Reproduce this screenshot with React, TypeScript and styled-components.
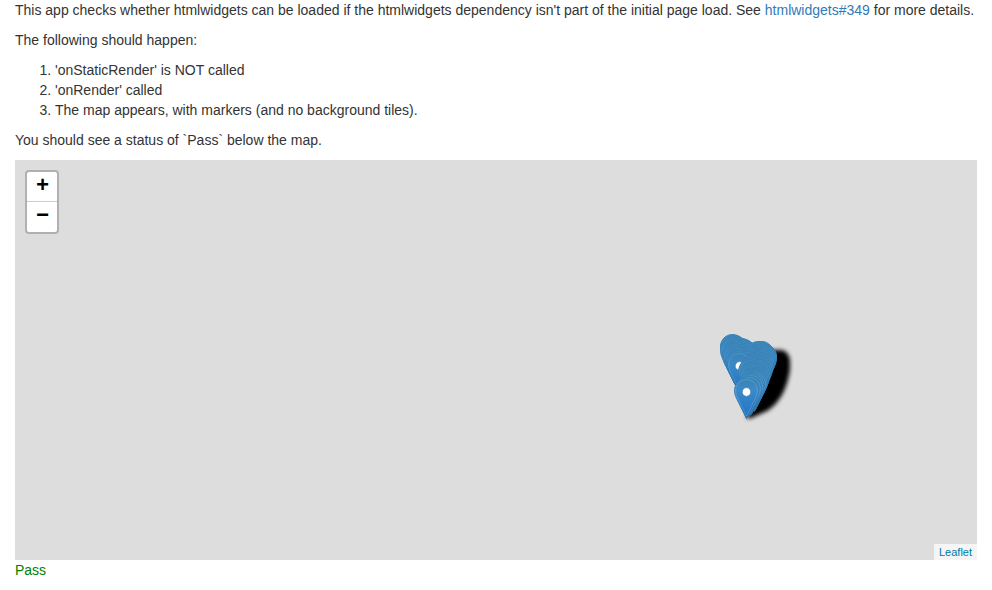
import React from "react";
import styled, { createGlobalStyle } from "styled-components";

const GlobalStyle = createGlobalStyle`
  * { box-sizing: border-box; }
  body {
    margin: 0;
    background: #fff;
    color: #333;
    font: 14px/20px "Liberation Sans", Arial, sans-serif;
  }
`;

const Page = styled.main`
  padding: 0 15px;
`;

const Paragraph = styled.p`
  margin: 0 0 10px;
  white-space: nowrap;
`;

const IssueLink = styled.a`
  color: #337ab7;
  text-decoration: none;
`;

const Steps = styled.ol`
  margin: 0 0 10px;
  padding-left: 40px;
`;

const MapPane = styled.section`
  position: relative;
  height: 400px;
  overflow: hidden;
  background: #ddd;
`;

const MarkerLayer = styled.svg`
  position: absolute;
  inset: 0;
  width: 962px;
  height: 400px;
`;

const ZoomControl = styled.div`
  position: absolute;
  top: 10px;
  left: 10px;
  width: 34px;
  border: 2px solid rgba(0, 0, 0, 0.2);
  border-radius: 4px;
  background: #fff;
  background-clip: padding-box;
`;

const ZoomButton = styled.a<{ $divided?: boolean }>`
  display: block;
  height: 30px;
  border-bottom: ${(p) => (p.$divided ? "1px solid #ccc" : "0")};
  color: #000;
  font: bold 22px/30px "Liberation Mono", monospace;
  text-align: center;
  text-indent: 1px;
  cursor: pointer;
`;

const Attribution = styled.div`
  position: absolute;
  right: 0;
  bottom: 0;
  height: 16px;
  padding: 0 5px;
  background: rgba(255, 255, 255, 0.7);
  color: #0078a8;
  font-size: 11px;
  line-height: 16px;
`;

const Status = styled.div`
  color: green;
`;

// Top-left corners of the 25x41 pins, north to south so southern pins overlap.
const pins: [number, number][] = [
  [705, 174], [707, 175], [714, 178], [706, 176], [710, 177], [716, 179],
  [734, 181], [731, 181], [729, 182], [737, 184], [708, 178], [718, 181],
  [712, 180], [705, 178], [736, 184], [719, 183], [737, 186], [709, 181],
  [715, 184], [707, 183], [720, 186], [713, 186], [736, 188], [708, 185],
  [717, 188], [710, 187], [735, 190], [711, 190], [720, 191], [712, 192],
  [734, 193], [728, 194], [730, 195], [733, 196], [724, 197], [729, 198],
  [732, 199], [723, 199], [731, 201], [725, 203], [730, 204], [729, 207],
  [726, 208], [728, 209], [727, 211], [725, 212], [723, 213], [724, 214],
  [722, 216], [719, 218],
];

const PIN_PATH =
  "M12.5.5C5.9.5.5 5.8.5 12.5c0 3 1 5.7 2.2 8.2L12.5 40.5l9.8-19.8c1.2-2.5 2.2-5.2 2.2-8.2C24.5 5.8 19.1.5 12.5.5Z";

const INNER_PATH =
  "M12.5 1.6c-6 0-10.9 4.8-10.9 10.9 0 2.8.9 5.3 2.1 7.7l8.8 17.9 8.8-17.9c1.2-2.4 2.1-4.9 2.1-7.7 0-6.1-4.9-10.9-10.9-10.9Z";

function Markers() {
  const last = pins.length - 1;
  return (
    <MarkerLayer viewBox="0 0 962 400" aria-label="Map markers">
      <defs>
        <linearGradient id="pinFill" x1="0" y1="0" x2="0" y2="1">
          <stop offset="0" stopColor="#3883b7" />
          <stop offset=".3" stopColor="#3b8ac8" />
          <stop offset=".8" stopColor="#2678c9" />
          <stop offset="1" stopColor="#2371c4" />
        </linearGradient>
        <linearGradient id="pinStroke" x1="0" y1="0" x2="0" y2="1">
          <stop offset="0" stopColor="#3883b7" />
          <stop offset=".5" stopColor="#327fb5" />
          <stop offset="1" stopColor="#2e6c97" />
        </linearGradient>
        <filter id="shadowBlur" x="-20%" y="-20%" width="140%" height="140%">
          <feGaussianBlur stdDeviation="1.9" />
        </filter>
        <g id="pinBody">
          <path d={PIN_PATH} fill="url(#pinFill)" stroke="url(#pinStroke)" />
          <circle cx="12.5" cy="14" r="4.4" fill="#fff" stroke="#3478ae" strokeWidth=".8" />
        </g>
      </defs>
      <path
        d="M732 259 740 190H766Q774 191 775 201V209Q774 219 769 231 763 244 752 251L736 258Z"
        fill="#000"
        filter="url(#shadowBlur)"
      />
      {pins.map(([x, y], i) => (
        <g key={i} transform={`translate(${x} ${y})`}>
          <use href="#pinBody" />
          <path
            d={INNER_PATH}
            fill="none"
            stroke="#fff"
            strokeOpacity={i === last ? 0.16 : y > 210 || y === 192 ? 0.13 : 0.06}
          />
        </g>
      ))}
    </MarkerLayer>
  );
}

export default function App() {
  return (
    <>
      <GlobalStyle />
      <Page>
        <Paragraph>
          This app checks whether htmlwidgets can be loaded if the htmlwidgets dependency isn't part of the
          initial page load. See <IssueLink>htmlwidgets#349</IssueLink> for more details.
        </Paragraph>
        <Paragraph>The following should happen:</Paragraph>
        <Steps>
          <li>'onStaticRender' is NOT called</li>
          <li>'onRender' called</li>
          <li>The map appears, with markers (and no background tiles).</li>
        </Steps>
        <Paragraph>You should see a status of `Pass` below the map.</Paragraph>
        <MapPane>
          <Markers />
          <ZoomControl>
            <ZoomButton $divided>+</ZoomButton>
            <ZoomButton>−</ZoomButton>
          </ZoomControl>
          <Attribution>Leaflet</Attribution>
        </MapPane>
        <Status>Pass</Status>
      </Page>
    </>
  );
}
